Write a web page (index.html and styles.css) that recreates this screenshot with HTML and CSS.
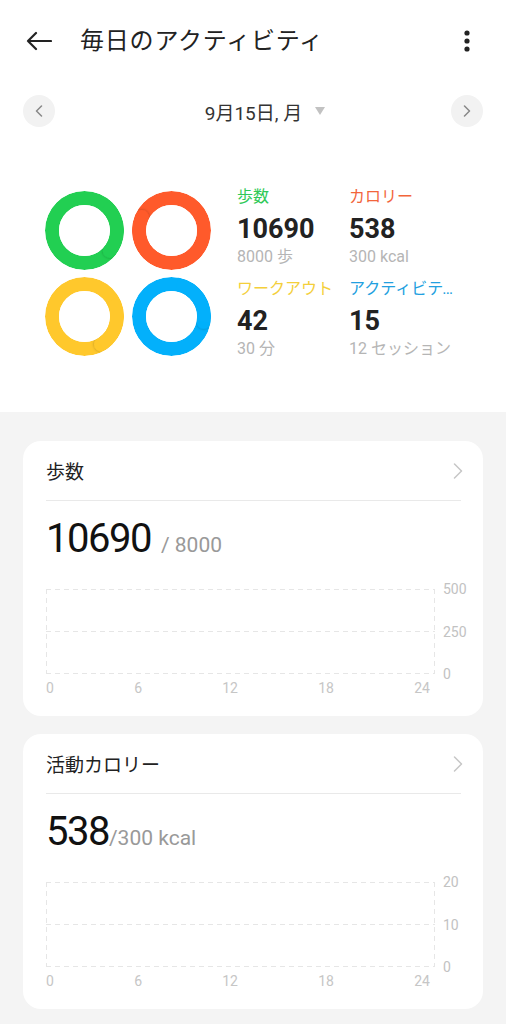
FILE: index.html
```html
<!DOCTYPE html>
<html lang="ja">
<head>
    <meta charset="UTF-8">
    <meta name="viewport" content="width=device-width, initial-scale=1.0">
    <title>毎日のアクティビティ</title>
    <link rel="stylesheet" href="styles.css">
</head>
<body>
    <header class="topbar">
        <button class="icon-btn">
            <svg width="26" height="20" viewBox="0 0 26 20"><path d="M25 10H2M10 2L2 10l8 8" fill="none" stroke="#222" stroke-width="2.2" stroke-linecap="round" stroke-linejoin="round"/></svg>
        </button>
        <h1 class="title">毎日のアクティビティ</h1>
        <button class="icon-btn more">
            <svg width="6" height="22" viewBox="0 0 6 22"><circle cx="3" cy="3" r="2.6" fill="#222"/><circle cx="3" cy="11" r="2.6" fill="#222"/><circle cx="3" cy="19" r="2.6" fill="#222"/></svg>
        </button>
    </header>

    <div class="date-row">
        <button class="round-btn">
            <svg width="8" height="12" viewBox="0 0 8 12"><path d="M6.5 1L1.5 6l5 5" fill="none" stroke="#888" stroke-width="1.5" stroke-linecap="round" stroke-linejoin="round"/></svg>
        </button>
        <div class="date-label">9月15日, 月<span class="caret"></span></div>
        <button class="round-btn">
            <svg width="8" height="12" viewBox="0 0 8 12"><path d="M1.5 1l5 5-5 5" fill="none" stroke="#888" stroke-width="1.5" stroke-linecap="round" stroke-linejoin="round"/></svg>
        </button>
    </div>

    <section class="summary">
        <div class="rings">
            <svg class="ring" width="79" height="79" viewBox="0 0 79 79">
                <defs>
                    <clipPath id="ring-clip"><path clip-rule="evenodd" d="M0 39.5a39.5 39.5 0 1 0 79 0a39.5 39.5 0 1 0-79 0ZM14 39.5a25.5 25.5 0 1 0 51 0a25.5 25.5 0 1 0-51 0Z"/></clipPath>
                    <filter id="cap-shadow" x="-60%" y="-60%" width="220%" height="220%"><feDropShadow dx="0" dy="0" stdDeviation="1.4" flood-color="#000" flood-opacity="0.3"/></filter>
                </defs>
                <g clip-path="url(#ring-clip)">
                    <circle cx="39.5" cy="39.5" r="32.5" fill="none" stroke="#22cf52" stroke-width="14"/>
                    <circle cx="64.8" cy="59.9" r="7" fill="#22cf52" filter="url(#cap-shadow)"/>
                    <path d="M59.9 14.2A32.5 32.5 0 0 1 64.8 59.9" fill="none" stroke="#22cf52" stroke-width="14"/>
                </g>
            </svg>
            <svg class="ring" width="79" height="79" viewBox="0 0 79 79">
                <g clip-path="url(#ring-clip)">
                    <circle cx="39.5" cy="39.5" r="32.5" fill="none" stroke="#ff5a2b" stroke-width="14"/>
                    <circle cx="9.9" cy="26.1" r="7" fill="#ff5a2b" filter="url(#cap-shadow)"/>
                    <path d="M26.1 69.1A32.5 32.5 0 0 1 9.9 26.1" fill="none" stroke="#ff5a2b" stroke-width="14"/>
                </g>
            </svg>
            <svg class="ring" width="79" height="79" viewBox="0 0 79 79">
                <g clip-path="url(#ring-clip)">
                    <circle cx="39.5" cy="39.5" r="32.5" fill="none" stroke="#ffc82c" stroke-width="14"/>
                    <circle cx="56.1" cy="67.4" r="7" fill="#ffc82c" filter="url(#cap-shadow)"/>
                    <path d="M67.4 22.9A32.5 32.5 0 0 1 56.1 67.4" fill="none" stroke="#ffc82c" stroke-width="14"/>
                </g>
            </svg>
            <svg class="ring" width="79" height="79" viewBox="0 0 79 79">
                <g clip-path="url(#ring-clip)">
                    <circle cx="39.5" cy="39.5" r="32.5" fill="none" stroke="#03b0fb" stroke-width="14"/>
                    <circle cx="71.6" cy="44.7" r="7" fill="#03b0fb" filter="url(#cap-shadow)"/>
                    <path d="M44.7 7.4A32.5 32.5 0 0 1 71.6 44.7" fill="none" stroke="#03b0fb" stroke-width="14"/>
                </g>
            </svg>
        </div>

        <div class="stats">
            <div class="stat">
                <div class="stat-label steps">歩数</div>
                <div class="stat-value">10690</div>
                <div class="stat-sub">8000 歩</div>
            </div>
            <div class="stat">
                <div class="stat-label calories">カロリー</div>
                <div class="stat-value">538</div>
                <div class="stat-sub">300 kcal</div>
            </div>
            <div class="stat">
                <div class="stat-label workout">ワークアウト</div>
                <div class="stat-value">42</div>
                <div class="stat-sub">30 分</div>
            </div>
            <div class="stat">
                <div class="stat-label activity">アクティビティ</div>
                <div class="stat-value">15</div>
                <div class="stat-sub">12 セッション</div>
            </div>
        </div>
    </section>

    <main class="cards">
        <article class="card">
            <div class="card-head">
                <h2>歩数</h2>
                <svg class="chevron" width="10" height="16" viewBox="0 0 10 16"><path d="M1.5 1l7 7-7 7" fill="none" stroke="#c6c6c6" stroke-width="1.5" stroke-linecap="round" stroke-linejoin="round"/></svg>
            </div>
            <div class="card-value">
                <span class="big">10690</span>
                <span class="goal spaced">/ 8000</span>
            </div>
            <div class="chart">
                <div class="chart-body">
                    <div class="plot"></div>
                    <div class="x-axis"><span>0</span><span>6</span><span>12</span><span>18</span><span>24</span></div>
                </div>
                <div class="y-axis"><span>500</span><span>250</span><span>0</span></div>
            </div>
        </article>

        <article class="card">
            <div class="card-head">
                <h2>活動カロリー</h2>
                <svg class="chevron" width="10" height="16" viewBox="0 0 10 16"><path d="M1.5 1l7 7-7 7" fill="none" stroke="#c6c6c6" stroke-width="1.5" stroke-linecap="round" stroke-linejoin="round"/></svg>
            </div>
            <div class="card-value">
                <span class="big">538</span>
                <span class="goal">/300 kcal</span>
            </div>
            <div class="chart">
                <div class="chart-body">
                    <div class="plot"></div>
                    <div class="x-axis"><span>0</span><span>6</span><span>12</span><span>18</span><span>24</span></div>
                </div>
                <div class="y-axis"><span>20</span><span>10</span><span>0</span></div>
            </div>
        </article>
    </main>
</body>
</html>
```

FILE: styles.css
```css
* {
    box-sizing: border-box;
    margin: 0;
    padding: 0;
}

body {
    font-family: Roboto, "Noto Sans CJK JP", sans-serif;
    background-color: #fff;
    color: #222;
    width: 506px;
}

button {
    background: none;
    border: none;
    cursor: pointer;
    display: flex;
    align-items: center;
    justify-content: center;
}

/* header */
.topbar {
    display: flex;
    align-items: center;
    height: 82px;
    padding: 0 36px 0 26px;
}

.title {
    font-size: 24px;
    font-weight: 400;
    line-height: 1;
    letter-spacing: 0.8px;
    margin-left: 28px;
    color: #222;
}

.more {
    margin-left: auto;
}

/* date switcher */
.date-row {
    display: flex;
    align-items: center;
    justify-content: space-between;
    height: 58px;
    padding: 0 23px;
}

.round-btn {
    width: 32px;
    height: 32px;
    border-radius: 50%;
    background-color: #f2f2f2;
}

.date-label {
    display: flex;
    align-items: center;
    gap: 13px;
    margin-left: 24px;
    font-size: 19px;
    color: #333;
}

.caret {
    width: 0;
    height: 0;
    border-left: 5.5px solid transparent;
    border-right: 5.5px solid transparent;
    border-top: 8px solid #c2c2c2;
}

/* summary */
.summary {
    display: flex;
    align-items: flex-start;
    padding: 46px 0 52px 45px;
}

.rings {
    display: grid;
    grid-template-columns: 79px 79px;
    gap: 7px 8px;
    margin-top: 5px;
}

.ring {
    display: block;
}

.stats {
    display: grid;
    grid-template-columns: 112px 109px;
    row-gap: 10px;
    margin-left: 26px;
}

.stat-label {
    font-size: 16px;
    line-height: 22px;
    white-space: nowrap;
    overflow: hidden;
    text-overflow: ellipsis;
}

.steps { color: #2fc957; }
.calories { color: #f2653b; }
.workout { color: #f4cf3b; }
.activity { color: #229fe0; }

.stat-value {
    font-size: 27px;
    font-weight: 700;
    line-height: 34px;
    margin-top: 4px;
    color: #222;
}

.stat-sub {
    font-size: 16px;
    line-height: 22px;
    color: #b5b5b5;
}

/* cards */
.cards {
    display: flex;
    flex-direction: column;
    gap: 18px;
    background-color: #f4f4f4;
    padding: 29px 23px 16px;
}

.card {
    background-color: #fff;
    border-radius: 18px;
    padding: 0 22px 20px 23px;
}

.card-head {
    display: flex;
    align-items: center;
    justify-content: space-between;
    height: 60px;
    border-bottom: 1px solid #e9e9e9;
}

.card-head h2 {
    font-size: 19px;
    font-weight: 400;
    color: #222;
}

.chevron {
    margin-right: -2px;
}

.card-value {
    display: flex;
    align-items: baseline;
    margin-top: 14px;
    height: 48px;
}

.big {
    font-size: 40px;
    line-height: 48px;
    letter-spacing: -1.5px;
    color: #111;
}

.goal {
    font-size: 21px;
    line-height: 1;
    color: #999;
}

.goal.spaced {
    margin-left: 10px;
}

.chart {
    display: flex;
    align-items: flex-start;
    margin-top: 26px;
}

.chart-body {
    flex: 1;
}

.plot {
    height: 85px;
    background:
        repeating-linear-gradient(90deg, #e6e6e6 0 5px, transparent 5px 9px) 0 0 / 100% 1px no-repeat,
        repeating-linear-gradient(90deg, #e6e6e6 0 5px, transparent 5px 9px) 0 50% / 100% 1px no-repeat,
        repeating-linear-gradient(90deg, #e6e6e6 0 5px, transparent 5px 9px) 0 100% / 100% 1px no-repeat,
        repeating-linear-gradient(180deg, #e6e6e6 0 5px, transparent 5px 9px) 0 0 / 1px 100% no-repeat,
        repeating-linear-gradient(180deg, #e6e6e6 0 5px, transparent 5px 9px) 100% 0 / 1px 100% no-repeat;
}

.x-axis {
    display: flex;
    justify-content: space-between;
    padding-right: 5px;
    margin-top: 6px;
    font-size: 14px;
    line-height: 16px;
    color: #c6c6c6;
}

.y-axis {
    width: 26px;
    height: 101px;
    margin-top: -8px;
    padding-left: 8px;
    display: flex;
    flex-direction: column;
    justify-content: space-between;
    font-size: 14px;
    line-height: 16px;
    color: #c2c2c2;
}
```
